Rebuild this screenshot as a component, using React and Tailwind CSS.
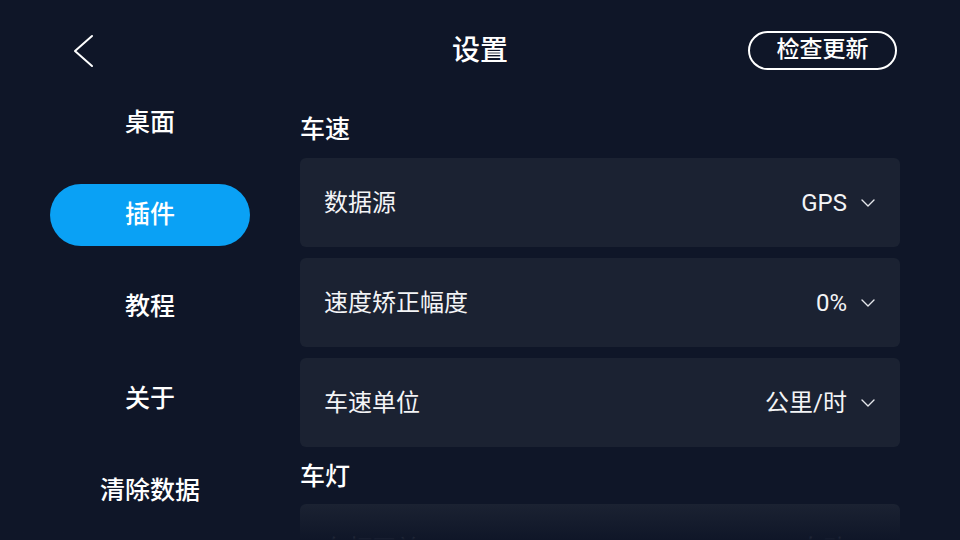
const menu = ["桌面", "插件", "教程", "关于", "清除数据"];

const speedRows = [
  { label: "数据源", value: "GPS" },
  { label: "速度矫正幅度", value: "0%" },
  { label: "车速单位", value: "公里/时" },
];

const Chevron = () => (
  <svg width="14" height="8" viewBox="0 0 14 8" fill="none" className="ml-[14px]">
    <path d="M1 1l6 6 6-6" stroke="#e5e7eb" strokeWidth="1.4" strokeLinecap="round" strokeLinejoin="round" />
  </svg>
);

const Row = ({ label, value }) => (
  <div className="flex h-[89px] items-center justify-between rounded-[6px] bg-[#1b2232] pl-6 pr-[25px]">
    <span className="text-[24px] text-[#f3f4f6]">{label}</span>
    <div className="flex items-center">
      <span className="text-[24px] text-[#f3f4f6]">{value}</span>
      <Chevron />
    </div>
  </div>
);

const App = () => {
  return (
    <div
      className="relative h-[540px] w-[960px] overflow-hidden bg-[#0f1628] text-white"
      style={{ fontFamily: 'Roboto, "Noto Sans CJK SC", sans-serif' }}
    >
      {/* Header */}
      <div className="relative flex h-[76px] items-start pt-[31px]">
        <button className="ml-[70px] flex h-[39px] w-[26px] items-center justify-center text-white">
          <svg width="24" height="34" viewBox="0 0 24 34" fill="none">
            <path d="M21 2L4 17l17 15" stroke="white" strokeWidth="2" strokeLinecap="round" strokeLinejoin="round" />
          </svg>
        </button>
        <h1 className="absolute left-1/2 top-[31px] flex h-[39px] -translate-x-1/2 items-center text-[28px] font-medium">设置</h1>
        <button className="ml-auto mr-[63px] flex h-[39px] w-[149px] items-center justify-center rounded-full border-2 border-white text-[23px] font-medium">
          检查更新
        </button>
      </div>

      <div className="flex pt-[1px]">
        {/* Sidebar */}
        <div className="flex w-[300px] flex-col">
          {menu.map((item, i) => (
            <div key={item} className="flex h-[92px] items-center justify-center">
              {i === 1 ? (
                <div className="flex h-[62px] w-[200px] items-center justify-center rounded-full bg-[#0aa1f5] text-[25px] font-medium">
                  {item}
                </div>
              ) : (
                <span className="text-[25px] font-medium">{item}</span>
              )}
            </div>
          ))}
        </div>

        {/* Content */}
        <div className="w-[600px] pt-[38px]">
          <h2 className="mb-[13px] text-[25px] leading-[30px] font-medium">车速</h2>
          <div className="flex flex-col gap-[11px]">
            {speedRows.map((r) => (
              <Row key={r.label} {...r} />
            ))}
          </div>
          <h2 className="mb-[12px] mt-[15px] text-[25px] leading-[30px] font-medium">车灯</h2>
          <Row label="车灯开关" value="自动" />
        </div>
      </div>

      {/* bottom fade */}
      <div className="pointer-events-none absolute bottom-0 left-0 right-0 h-[36px] bg-gradient-to-b from-transparent to-[#0f1628]" />
    </div>
  );
};

export default App;
